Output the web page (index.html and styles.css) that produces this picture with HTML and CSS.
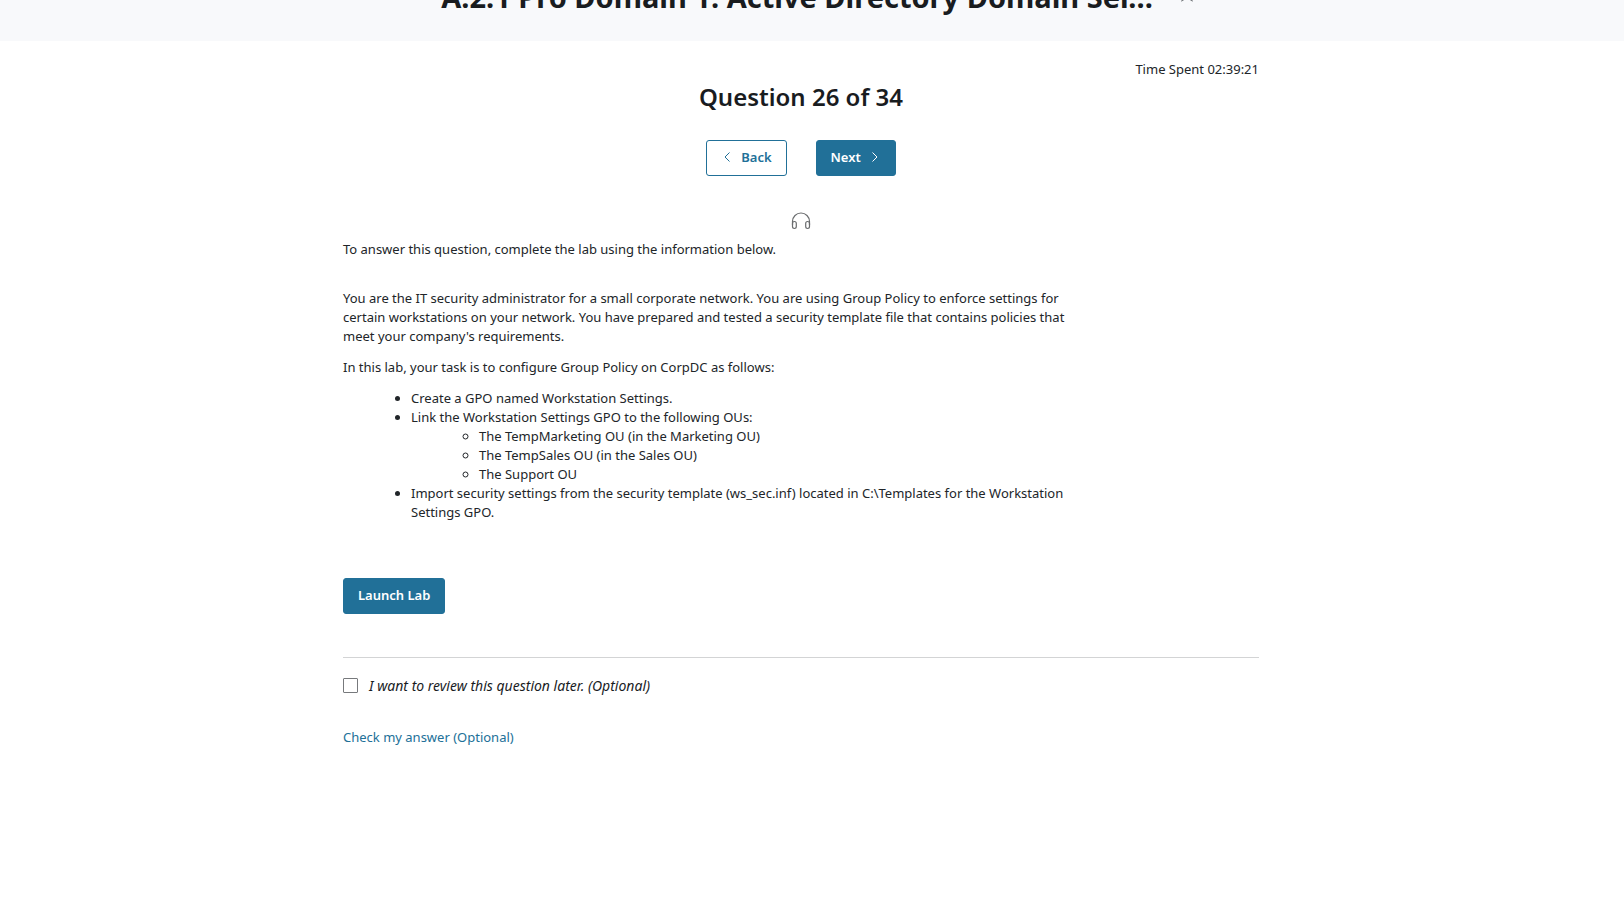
FILE: index.html
```html
<!DOCTYPE html>
<html lang="en">
<head>
<meta charset="utf-8">
<title>Question 26 of 34</title>
<link rel="stylesheet" href="styles.css">
</head>
<body>
<header class="page-header">
  <h1 class="page-title">A.2.1 Pro Domain 1: Active Directory Domain Ser...</h1>
  <button class="icon-button" type="button" aria-label="Favorite">
    <svg width="18" height="18" viewBox="0 0 18 18" fill="none" stroke="#6b6f73" stroke-width="1.2"><path d="M9 1.5l2.2 5.2 5.6.5-4.2 3.7 1.3 5.6L9 13.5l-4.900 3 1.300-5.600L1.200 7.200l5.600-.5z"/></svg>
  </button>
</header>
<main class="content">
  <p class="timer">Time Spent 02:39:21</p>
  <h2 class="question-title">Question 26 of 34</h2>
  <nav class="pager" aria-label="Questions">
    <button class="button button-outline" type="button"><svg class="chevron" width="12" height="12" viewBox="0 0 12 12" fill="none" stroke="currentColor"><path d="M8.500 1.500L4 6l4.500 4.500"/></svg>Back</button>
    <button class="button" type="button">Next<svg class="chevron" width="12" height="12" viewBox="0 0 12 12" fill="none" stroke="currentColor"><path d="M3.500 1.500L8 6l-4.500 4.500"/></svg></button>
  </nav>
  <button class="icon-button listen" type="button" aria-label="Listen">
    <svg width="20" height="18" viewBox="0 0 20 18" fill="none" stroke="#6a6c6e" stroke-width="1.200"><path d="M1.500 13V9.500a8.500 8.500 0 0 1 17 0V13"/><rect x="1.500" y="9.500" width="3.800" height="7" rx="1.900"/><rect x="14.700" y="9.500" width="3.800" height="7" rx="1.900"/></svg>
  </button>
  <section class="question">
    <p class="intro">To answer this question, complete the lab using the information below.</p>
    <p>You are the IT security administrator for a small corporate network. You are using Group Policy to enforce settings for certain workstations on your network. You have prepared and tested a security template file that contains policies that meet your company's requirements.</p>
    <p>In this lab, your task is to configure Group Policy on CorpDC as follows:</p>
    <ul class="tasks">
      <li>Create a GPO named Workstation Settings.</li>
      <li>Link the Workstation Settings GPO to the following OUs:
        <ul class="tasks">
          <li>The TempMarketing OU (in the Marketing OU)</li>
          <li>The TempSales OU (in the Sales OU)</li>
          <li>The Support OU</li>
        </ul>
      </li>
      <li>Import security settings from the security template (ws_sec.inf) located in C:\Templates for the Workstation Settings GPO.</li>
    </ul>
  </section>
  <button class="button launch" type="button">Launch Lab</button>
  <div class="review">
    <input class="checkbox" type="checkbox" id="review">
    <label for="review">I want to review this question later. (Optional)</label>
  </div>
  <a class="check-link" href="#check">Check my answer (Optional)</a>
</main>
</body>
</html>
```

FILE: styles.css
```css
* { box-sizing: border-box; }
body {
  margin: 0;
  background: #fff;
  color: #212529;
  font: 13px/19px "Noto Sans", sans-serif;
}
h1, h2, p, ul { margin: 0; }
.page-header {
  display: flex;
  justify-content: center;
  align-items: flex-end;
  gap: 25px;
  height: 41px;
  padding: 0 0 25px 13px;
  overflow: hidden;
  background: #f8f9fb;
}
.page-title {
  color: #191c1f;
  font-size: 29px;
  font-weight: 700;
  line-height: 38px;
  white-space: nowrap;
}
.icon-button {
  display: flex;
  padding: 0;
  border: 0;
  background: none;
}
.page-header .icon-button { margin-bottom: 14px; }
.content {
  display: flex;
  flex-direction: column;
  align-items: flex-start;
  max-width: 938px;
  margin: 0 auto;
  padding: 19px 22px 24px 0;
}
.timer { align-self: flex-end; }
.question-title {
  align-self: center;
  margin-top: 2px;
  color: #191c1f;
  font-size: 24px;
  font-weight: 600;
  line-height: 32px;
}
.pager {
  display: flex;
  align-self: center;
  gap: 29px;
  margin-top: 27px;
}
.button {
  display: flex;
  align-items: center;
  gap: 8px;
  height: 36px;
  padding: 0 14px 2px;
  border: 1px solid #217098;
  border-radius: 3px;
  background: #217098;
  color: #fff;
  font: 600 13px/19px "Noto Sans", sans-serif;
}
.button-outline { background: #fff; color: #217098; }
.listen { align-self: center; margin-top: 36px; }
.question {
  display: flex;
  flex-direction: column;
  gap: 12px;
  max-width: 728px;
  margin-top: 10px;
}
.intro { margin-bottom: 18px; }
.tasks { padding-left: 68px; }
.launch { margin-top: 56px; }
.review {
  display: flex;
  align-items: center;
  align-self: stretch;
  gap: 11px;
  margin-top: 43px;
  padding-top: 18px;
  border-top: 1px solid #d3d4d5;
  color: #191c1f;
  font-size: 14px;
  font-style: italic;
}
.checkbox {
  appearance: none;
  width: 15px;
  height: 15px;
  margin: 0;
  border: 1px solid #77797c;
  border-radius: 1px;
}
.check-link {
  margin-top: 33px;
  color: #217098;
  text-decoration: none;
}
```
